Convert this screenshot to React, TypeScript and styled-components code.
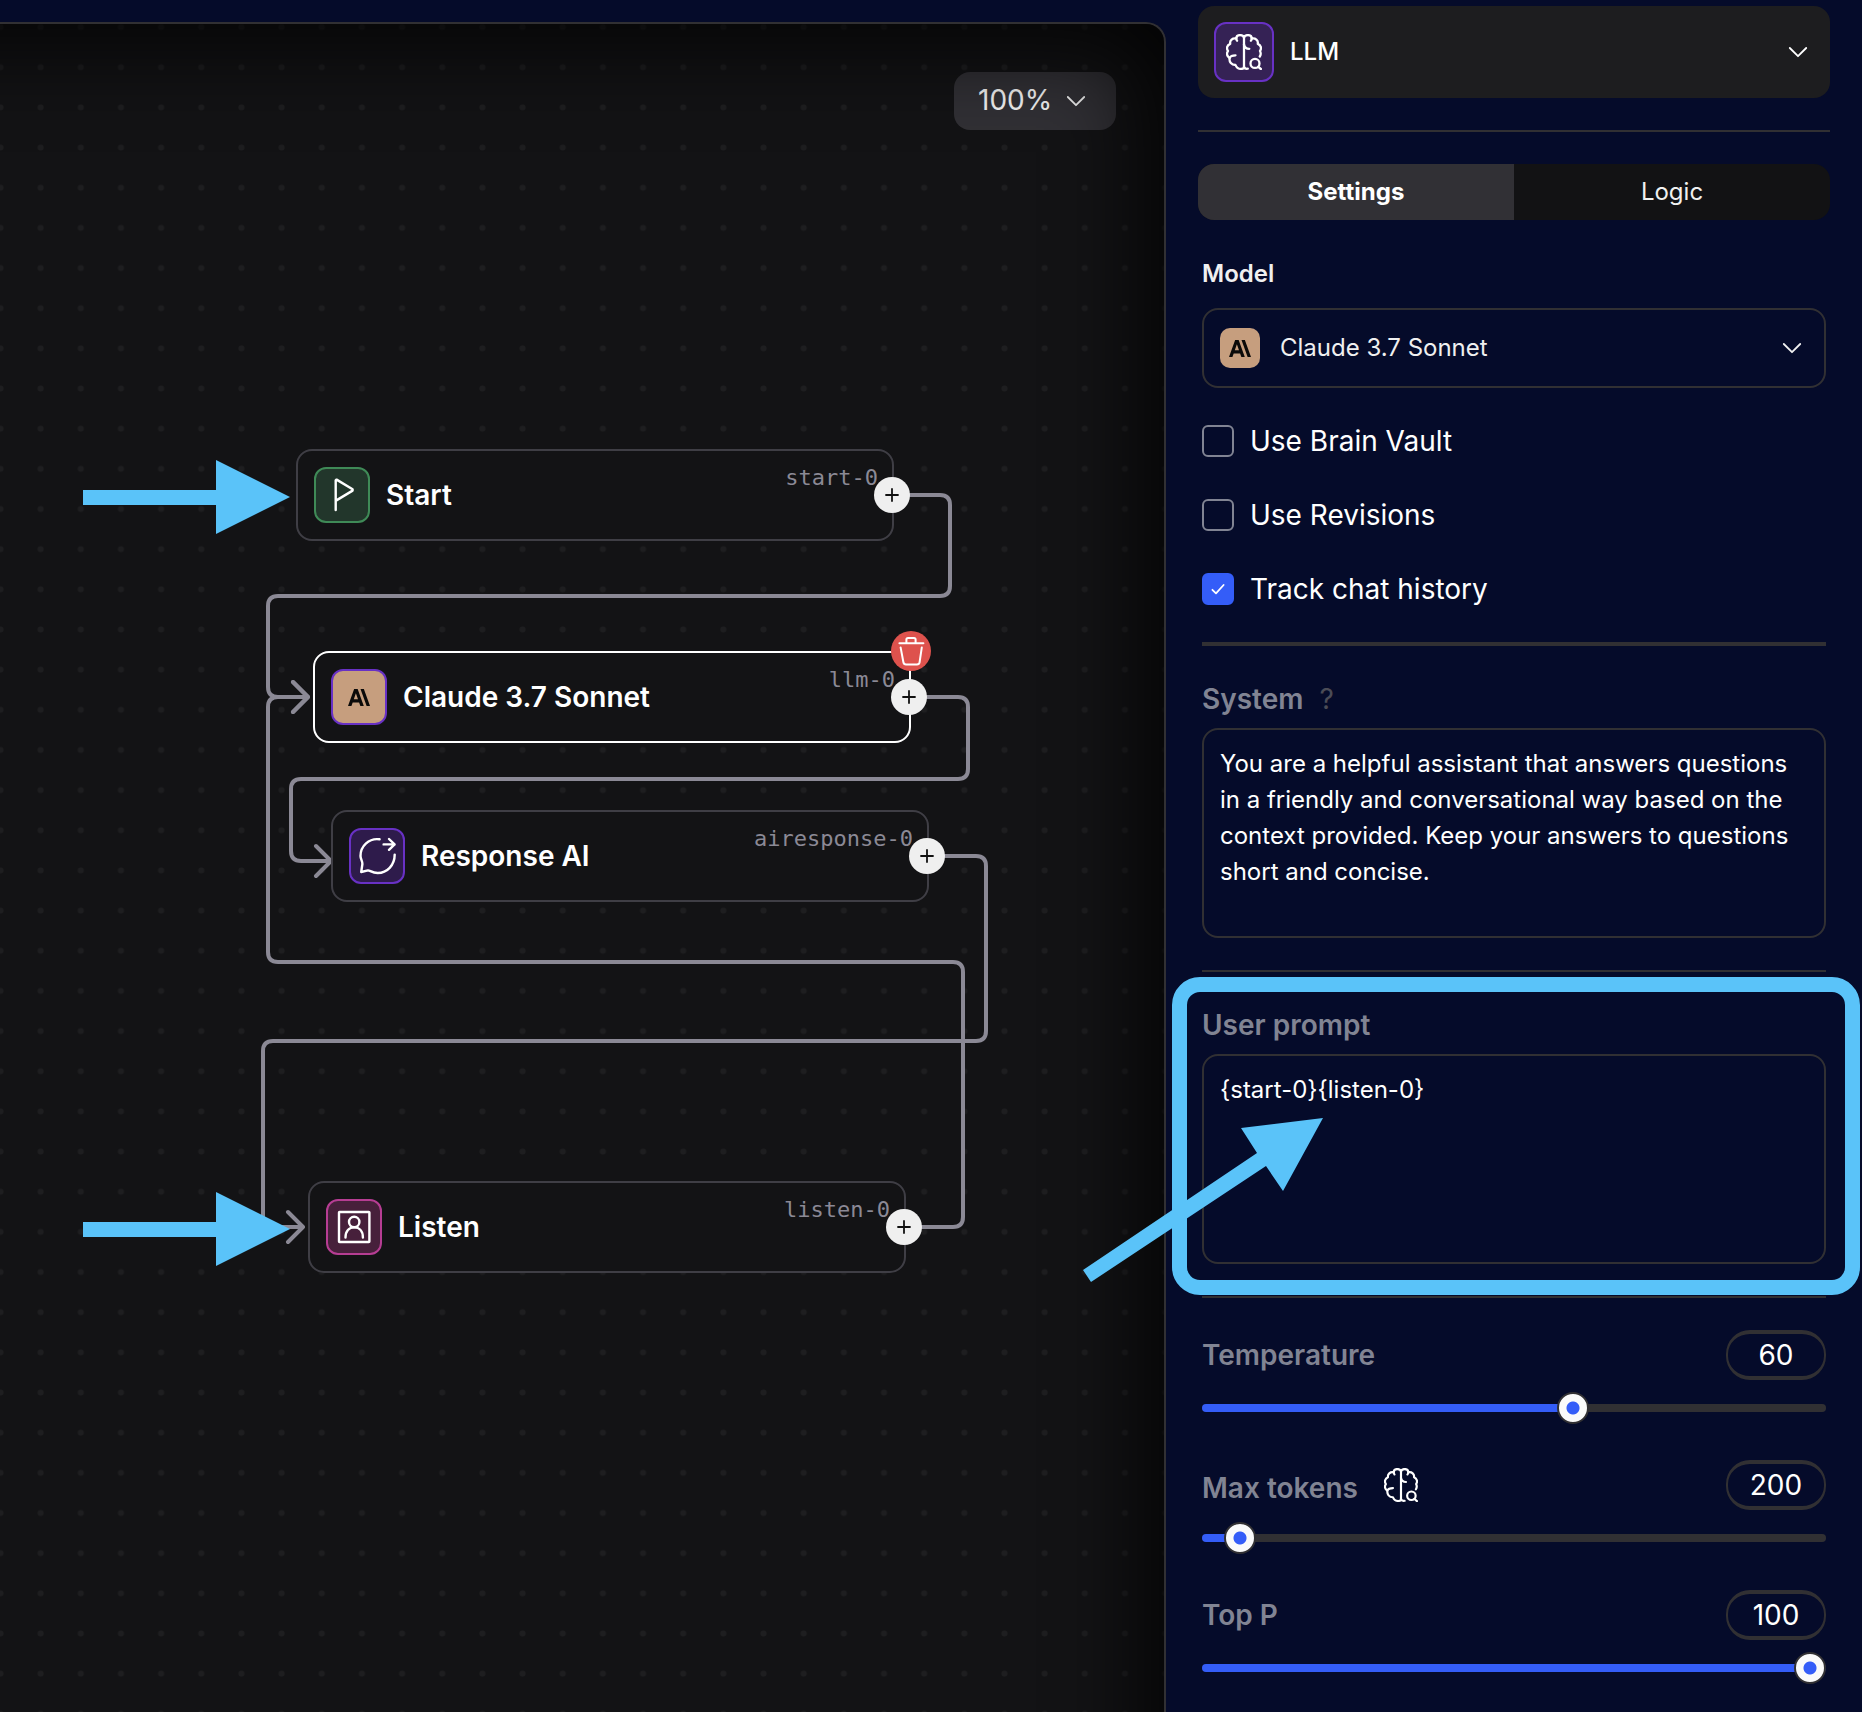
import React, { useId, useState } from "react";
import styled, { createGlobalStyle } from "styled-components";

const color = {
  page: "#050b2a",
  canvas: "#131315",
  card: "#1d1d1f",
  line: "#313033",
  nodeLine: "#3f3e45",
  edge: "#8b8995",
  muted: "#818493",
  text: "#ffffff",
  accent: "#345df8",
  note: "#5ac3f9",
};

const GlobalStyle = createGlobalStyle`
  *, *::before, *::after { box-sizing: border-box; }
  body {
    margin: 0;
    background: ${color.page};
    color: ${color.text};
    font-family: Inter, "Liberation Sans", sans-serif;
    font-size: 24px;
  }
  button, input, select, textarea { font: inherit; color: inherit; }
`;

/* ---------- shared pieces ---------- */

const Page = styled.div`
  display: flex;
  min-height: 100vh;
  overflow: hidden;
`;

const BareSelect = styled.select`
  flex: 1;
  min-width: 0;
  align-self: stretch;
  padding: 0 0 2px;
  border: 0;
  background: transparent;
  appearance: none;
  outline: none;
  cursor: pointer;

  option {
    color: #000000;
  }
`;

const Divider = styled.hr<{ $thick?: boolean }>`
  width: 100%;
  height: ${(p) => (p.$thick ? 4 : 2)}px;
  margin: 0;
  border: 0;
  background: ${color.line};
`;

const Drawing = styled.svg`
  display: block;
  flex: none;
  fill: none;
  stroke: currentColor;
  stroke-linecap: round;
  stroke-linejoin: round;
  pointer-events: none;
`;

const Chevron = () => (
  <Drawing width="20" height="20" viewBox="0 0 20 20" strokeWidth="1.8" aria-hidden>
    <path d="M1.8 6 10 14.2 18.2 6" />
  </Drawing>
);

const BrainIcon = ({ size = 36 }: { size?: number }) => (
  <Drawing width={size} height={size} viewBox="0 0 36 36" strokeWidth="2.3" aria-hidden>
    <path d="M18 33V4C18 2 16 1.1 14 1.1 11.8 1.1 10.3 2.6 10.3 4.6 6.5 3.8 3.6 6.4 4.2 9.8 1 11 .2 14.5 2 17 .2 19.5 1 22.5 3.6 24 3 28 5.5 31 9.5 31 10.5 34 13 34.9 15 34.9 17 34.9 18 34 18 33" />
    <path d="M10.3 4.6c0 1 .2 1.6.8 2.2M9.5 21.3C6.5 21.3 4.3 22.3 3.6 24" />
    <path d="M18 4C18 2 20 1.1 22 1.1 24.2 1.1 25.7 2.6 25.7 4.6 29.5 3.8 32.4 6.4 31.8 9.8 35 11 35.8 14.5 34 17 35 19 34.8 21 33.8 22.5" />
    <path d="M25.7 4.6c0 1-.2 1.6-.8 2.2M18 10.5C18.5 13.5 20.5 14.8 23.3 14.8M18 33C18.6 34.6 20 35 21.8 34.7" />
    <circle cx="29" cy="29.4" r="4.5" />
    <path d="M32.3 32.8 34.9 35" />
  </Drawing>
);

const Logo = styled.svg`
  display: block;
  fill: #0b0a09;
`;

const AnthropicLogo = () => (
  <Logo width="22" height="17" viewBox="0 3.5 24 17" preserveAspectRatio="none" aria-hidden>
    <path d="M17.3041 3.541h-3.6718l6.696 16.918H24Zm-10.6082 0L0 20.459h3.7442l1.3693-3.5527h7.0052l1.3693 3.5528h3.7442L10.5363 3.5409Zm-.3712 10.2232 2.2914-5.9456 2.2914 5.9456Z" />
  </Logo>
);

const FlagIcon = () => (
  <Drawing width="52" height="52" viewBox="2 2 52 52" strokeWidth="2.4" aria-hidden>
    <path d="M21.7 43V13.2L22.6 12.6 38.6 22.3V23.6L22 33.6" />
  </Drawing>
);

const ReplyIcon = () => (
  <Drawing width="52" height="52" viewBox="2 2 52 52" strokeWidth="2.4" aria-hidden>
    <path d="M30.6 11.3C20 9.8 11.5 18 11.5 28 11.5 31 13.6 33.5 13.4 36L12.2 44 19 42.4C20.8 42.2 23 45 28.7 45 38 45 45.7 37.5 45.7 26.6" />
    <path d="M34.6 16.4H45.6M40 11 45.6 16.4 40 21.8" />
  </Drawing>
);

const PersonIcon = () => (
  <Drawing width="52" height="52" viewBox="2 2 52 52" strokeWidth="2.4" aria-hidden>
    <rect x="13" y="13" width="30.4" height="30" rx="0.6" />
    <circle cx="28.2" cy="23" r="5.2" />
    <path d="M19.5 38.6C19.5 32 23 28.4 28.2 28.4S36.9 32 36.9 38.6" />
  </Drawing>
);

/* ---------- canvas ---------- */

const Canvas = styled.main`
  position: relative;
  flex: 1;
  min-width: 0;
  margin-top: 22px;
  border: solid ${color.line};
  border-width: 2px 2px 0 0;
  border-radius: 0 20px 0 0;
  background: ${color.canvas};
  overflow: hidden;
`;

const CanvasLayer = styled(Drawing)`
  position: absolute;
  inset: 0;
  width: 100%;
  height: 100%;
`;

const Vignette = styled.div`
  position: absolute;
  inset: 0 0 -120px -120px;
  box-shadow: inset -20px 20px 90px rgba(0, 0, 0, 0.85);
  pointer-events: none;
`;

const ZoomPicker = styled.label`
  position: absolute;
  top: 48px;
  right: 48px;
  display: flex;
  align-items: center;
  width: 162px;
  height: 58px;
  padding: 0 30px 0 24px;
  border-radius: 16px;
  background: #313035;
  color: #f2f2f2;
  font-size: 28px;
`;

const NodeBox = styled.article<{ $x: number; $y: number; $selected?: boolean }>`
  position: absolute;
  left: ${(p) => p.$x}px;
  top: ${(p) => p.$y}px;
  display: flex;
  align-items: center;
  gap: 16px;
  width: 598px;
  height: 92px;
  padding: 16px 14px 16px 16px;
  border: 2px solid ${(p) => (p.$selected ? color.text : color.nodeLine)};
  border-radius: 16px;
  background: ${color.canvas};
`;

const IconTile = styled.span<{ $bg: string; $line: string; $size?: number }>`
  display: grid;
  place-items: center;
  flex: none;
  width: ${(p) => p.$size ?? 56}px;
  height: ${(p) => p.$size ?? 56}px;
  border: 2px solid ${(p) => p.$line};
  border-radius: 12px;
  background: ${(p) => p.$bg};
`;

const NodeTitle = styled.h2`
  flex: 1;
  margin: 0;
  font-size: 28px;
  line-height: 36px;
  font-weight: 600;
`;

const NodeId = styled.span`
  align-self: flex-start;
  color: ${color.edge};
  font: 22px/22px "DejaVu Sans Mono", monospace;
`;

const RoundButton = styled.button`
  position: absolute;
  display: grid;
  place-items: center;
  padding: 0;
  border: 0;
  border-radius: 50%;
  cursor: pointer;
`;

const AddButton = styled(RoundButton)`
  top: 26px;
  right: -18px;
  width: 36px;
  height: 36px;
  background: #efefef;
  color: #111111;
`;

const DeleteButton = styled(RoundButton)`
  top: -22px;
  right: -22px;
  width: 40px;
  height: 40px;
  background: #de524d;
`;

type Point = [number, number];

/** Orthogonal connector with rounded corners through the given points. */
function connector(points: Point[], radius = 10) {
  let d = `M${points[0].join(" ")}`;
  for (let i = 1; i < points.length - 1; i++) {
    const [px, py] = points[i - 1];
    const [x, y] = points[i];
    const [nx, ny] = points[i + 1];
    d += `L${x - Math.sign(x - px) * radius} ${y - Math.sign(y - py) * radius}`;
    d += `Q${x} ${y} ${x + Math.sign(nx - x) * radius} ${y + Math.sign(ny - y) * radius}`;
  }
  const [ex, ey] = points[points.length - 1];
  return `${d}L${ex} ${ey}M${ex - 15} ${ey - 15}L${ex} ${ey}L${ex - 15} ${ey + 15}`;
}

const edges: Point[][] = [
  [[908, 471], [950, 471], [950, 572], [268, 572], [268, 673], [308, 673]],
  [[926, 673], [968, 673], [968, 755], [291, 755], [291, 837], [331, 837]],
  [[944, 832], [986, 832], [986, 1017], [263, 1017], [263, 1203], [303, 1203]],
  [[921, 1203], [963, 1203], [963, 938], [268, 938], [268, 673], [308, 673]],
];

const nodes = [
  { id: "start-0", title: "Start", x: 296, y: 425, bg: "#22362b", line: "#3f8a57", icon: <FlagIcon /> },
  { id: "llm-0", title: "Claude 3.7 Sonnet", x: 313, y: 627, bg: "#c69e7e", line: "#6831c4", icon: <AnthropicLogo />, selected: true },
  { id: "airesponse-0", title: "Response AI", x: 331, y: 786, bg: "#2e1b4b", line: "#6831c4", icon: <ReplyIcon /> },
  { id: "listen-0", title: "Listen", x: 308, y: 1157, bg: "#47203b", line: "#b63d93", icon: <PersonIcon /> },
];

const PointerNotes = styled(CanvasLayer)`
  fill: ${color.note};
  stroke: none;
`;

function FlowCanvas() {
  return (
    <Canvas>
      <CanvasLayer aria-hidden>
        <defs>
          <pattern id="grid-dots" x="-19.6" y="-17" width="40.16" height="40.16" patternUnits="userSpaceOnUse">
            <circle cx="20.08" cy="20.08" r="3" fill="#1e1e20" stroke="none" />
          </pattern>
        </defs>
        <rect width="100%" height="100%" fill="url(#grid-dots)" stroke="none" />
        {edges.map((points, i) => (
          <path key={i} d={connector(points)} stroke={color.edge} strokeWidth="4" />
        ))}
      </CanvasLayer>
      {nodes.map((node) => (
        <NodeBox key={node.id} $x={node.x} $y={node.y} $selected={node.selected}>
          <IconTile $bg={node.bg} $line={node.line}>{node.icon}</IconTile>
          <NodeTitle>{node.title}</NodeTitle>
          <NodeId>{node.id}</NodeId>
          <AddButton type="button" aria-label={`Add step after ${node.title}`}>
            <Drawing width="14" height="14" viewBox="0 0 14 14" strokeWidth="1.8" aria-hidden>
              <path d="M7 1V13M1 7H13" />
            </Drawing>
          </AddButton>
          {node.selected && (
            <DeleteButton type="button" aria-label={`Delete ${node.title}`}>
              <Drawing width="40" height="40" viewBox="0 0 40 40" strokeWidth="2" aria-hidden>
                <path d="M8.4 12.2H32.4M15.4 12V8.6Q15.4 7 17 7H23Q24.6 7 24.6 8.6V12M9.6 16.4 12.4 31.2Q12.8 33.4 15 33.4H26Q28.2 33.4 28.6 31.2L30.8 16.4" />
              </Drawing>
            </DeleteButton>
          )}
        </NodeBox>
      ))}
      <ZoomPicker>
        <BareSelect aria-label="Zoom level" defaultValue="100%">
          <option>100%</option>
        </BareSelect>
        <Chevron />
      </ZoomPicker>
      <Vignette />
      <PointerNotes aria-hidden>
        <path d="M83 466H216V436L290 473L216 510V481H83Z" />
        <path d="M83 1198H216V1168L290 1205L216 1242V1213H83Z" />
      </PointerNotes>
    </Canvas>
  );
}

/* ---------- sidebar ---------- */

const Sidebar = styled.aside`
  display: flex;
  flex-direction: column;
  flex: none;
  gap: 32px;
  width: 696px;
  padding: 6px 32px 24px;
`;

const TypePicker = styled.label`
  display: flex;
  align-items: center;
  gap: 16px;
  height: 92px;
  padding: 0 22px 0 16px;
  border-radius: 16px;
  background: ${color.card};
  font-weight: 500;
`;

const Tabs = styled.div`
  display: grid;
  grid-template-columns: 1fr 1fr;
  height: 56px;
  border-radius: 16px;
  background: #121214;
  overflow: hidden;
`;

const Tab = styled.button<{ $active?: boolean }>`
  padding: 0 0 2px;
  border: 0;
  background: ${(p) => (p.$active ? "#313035" : "transparent")};
  color: ${(p) => (p.$active ? color.text : "#f0f0f0")};
  font-weight: ${(p) => (p.$active ? 700 : 400)};
  cursor: pointer;
`;

const Panel = styled.form`
  display: flex;
  flex-direction: column;
  padding: 8px 4px 0;
`;

const ModelField = styled.div`
  display: flex;
  flex-direction: column;
  gap: 20px;
`;

const ModelLabel = styled.label`
  color: #f0f0f0;
  font-weight: 600;
  line-height: 28px;
`;

const ModelPicker = styled.div`
  display: flex;
  align-items: center;
  gap: 20px;
  height: 80px;
  padding: 0 22px 0 16px;
  border: 2px solid ${color.line};
  border-radius: 16px;
  color: #f0f0f0;
`;

const ModelBadge = styled.span`
  display: grid;
  place-items: center;
  width: 40px;
  height: 40px;
  border-radius: 10px;
  background: #c69e7e;
`;

const CheckList = styled.div`
  display: grid;
  grid-auto-rows: 74px;
  padding: 16px 0;
`;

const CheckRow = styled.label`
  display: flex;
  align-items: center;
  gap: 16px;
  font-size: 28px;
`;

const CheckMark = styled.span`
  display: grid;
  place-items: center;

  > * {
    grid-area: 1 / 1;
  }
`;

const CheckBox = styled.input`
  width: 32px;
  height: 32px;
  margin: 0;
  border: 2px solid ${color.muted};
  border-radius: 6px;
  appearance: none;

  &:checked {
    border-color: ${color.accent};
    background: ${color.accent};
  }
`;

const PromptField = styled.div`
  position: relative;
  display: flex;
  flex-direction: column;
  gap: 12px;
  padding: 36px 0 32px;
`;

const LabelRow = styled.div`
  display: flex;
  gap: 16px;
  line-height: 34px;
  font-size: 28px;
`;

const FieldLabel = styled.label`
  color: ${color.muted};
  font-size: 28px;
  font-weight: 600;
`;

const Hint = styled.span`
  color: #4b4c56;
`;

const PromptBox = styled.textarea`
  height: 210px;
  padding: 16px;
  border: 2px solid ${color.line};
  border-radius: 16px;
  background: transparent;
  line-height: 36px;
  outline: none;
  resize: none;
`;

const HighlightFrame = styled.div`
  position: absolute;
  inset: 5px -34px 1px -30px;
  border: 15px solid ${color.note};
  border-radius: 28px;
  pointer-events: none;
`;

const HighlightArrow = styled.svg`
  position: absolute;
  left: -120px;
  top: 140px;
  fill: ${color.note};
  pointer-events: none;
`;

const SliderList = styled.div`
  display: flex;
  flex-direction: column;
  gap: 36px;
  padding-top: 32px;
`;

const SliderField = styled.div`
  display: flex;
  flex-direction: column;
  gap: 12px;
`;

const SliderHead = styled.div`
  display: flex;
  align-items: center;
  justify-content: space-between;
`;

const SliderName = styled.div`
  display: flex;
  align-items: flex-end;
  gap: 26px;
  line-height: 28px;
`;

const ValueBox = styled.input`
  width: 100px;
  height: 50px;
  padding: 0;
  border: solid ${color.line};
  border-width: 4px 2px;
  border-radius: 24px;
  background: transparent;
  font-size: 28px;
  text-align: center;
  outline: none;
`;

const Range = styled.input`
  width: 100%;
  height: 32px;
  margin: 0;
  background: transparent;
  appearance: none;

  &::-webkit-slider-runnable-track {
    height: 8px;
    border-radius: 4px;
    background: linear-gradient(to right, ${color.accent} var(--filled), ${color.line} var(--filled));
  }

  &::-webkit-slider-thumb {
    width: 32px;
    height: 32px;
    margin-top: -12px;
    border: 2px solid ${color.line};
    border-radius: 50%;
    background: radial-gradient(circle, ${color.accent} 6px, #fafafa 7px);
    appearance: none;
  }
`;

function Check({ label, checked: initial = false }: { label: string; checked?: boolean }) {
  const [checked, setChecked] = useState(initial);
  return (
    <CheckRow>
      <CheckMark>
        <CheckBox type="checkbox" checked={checked} onChange={(e) => setChecked(e.target.checked)} />
        {checked && (
          <Drawing width="16" height="16" viewBox="0 0 16 16" strokeWidth="1.8" aria-hidden>
            <path d="M2.4 8.8 6 12.4 13.6 4" />
          </Drawing>
        )}
      </CheckMark>
      {label}
    </CheckRow>
  );
}

type SliderProps = { label: string; value: number; min?: number; max?: number; icon?: React.ReactNode };

function Slider({ label, value: initial, min = 0, max = 100, icon }: SliderProps) {
  const id = useId();
  const [value, setValue] = useState(initial);
  const filled = `${((value - min) / (max - min)) * 100}%`;
  return (
    <SliderField>
      <SliderHead>
        <SliderName>
          <FieldLabel htmlFor={id}>{label}</FieldLabel>
          {icon}
        </SliderName>
        <ValueBox aria-label={`${label} value`} value={value} onChange={(e) => setValue(Number(e.target.value) || min)} />
      </SliderHead>
      <Range
        id={id}
        type="range"
        min={min}
        max={max}
        value={value}
        onChange={(e) => setValue(Number(e.target.value))}
        style={{ "--filled": filled } as React.CSSProperties}
      />
    </SliderField>
  );
}

function SettingsSidebar() {
  return (
    <Sidebar>
      <TypePicker>
        <IconTile $bg="#352255" $line="#6831c4" $size={60}>
          <BrainIcon />
        </IconTile>
        <BareSelect aria-label="Step type" defaultValue="LLM">
          <option>LLM</option>
        </BareSelect>
        <Chevron />
      </TypePicker>
      <Divider />
      <Tabs role="tablist">
        <Tab type="button" role="tab" aria-selected $active>Settings</Tab>
        <Tab type="button" role="tab" aria-selected={false}>Logic</Tab>
      </Tabs>
      <Panel>
        <ModelField>
          <ModelLabel htmlFor="model">Model</ModelLabel>
          <ModelPicker>
            <ModelBadge><AnthropicLogo /></ModelBadge>
            <BareSelect id="model" defaultValue="Claude 3.7 Sonnet">
              <option>Claude 3.7 Sonnet</option>
            </BareSelect>
            <Chevron />
          </ModelPicker>
        </ModelField>
        <CheckList>
          <Check label="Use Brain Vault" />
          <Check label="Use Revisions" />
          <Check label="Track chat history" checked />
        </CheckList>
        <Divider $thick />
        <PromptField>
          <LabelRow>
            <FieldLabel htmlFor="system">System</FieldLabel>
            <Hint>?</Hint>
          </LabelRow>
          <PromptBox
            id="system"
            defaultValue="You are a helpful assistant that answers questions in a friendly and conversational way based on the context provided. Keep your answers to questions short and concise."
          />
        </PromptField>
        <Divider />
        <PromptField>
          <LabelRow>
            <FieldLabel htmlFor="user-prompt">User prompt</FieldLabel>
          </LabelRow>
          <PromptBox id="user-prompt" defaultValue="{start-0}{listen-0}" />
          <HighlightFrame />
          <HighlightArrow width="250" height="180" viewBox="1082 1112 250 180" aria-hidden>
            <path d="M1323 1118 1241 1128 1257 1153 1083 1270 1091 1282 1266 1166 1283 1191Z" />
          </HighlightArrow>
        </PromptField>
        <Divider />
        <SliderList>
          <Slider label="Temperature" value={60} />
          <Slider label="Max tokens" value={200} min={50} max={4096} icon={<BrainIcon size={34} />} />
          <Slider label="Top P" value={100} />
        </SliderList>
      </Panel>
    </Sidebar>
  );
}

export default function App() {
  return (
    <Page>
      <GlobalStyle />
      <FlowCanvas />
      <SettingsSidebar />
    </Page>
  );
}
